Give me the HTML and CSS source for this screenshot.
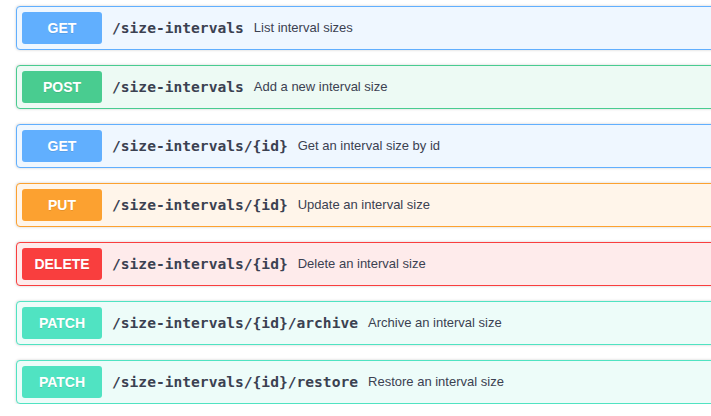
FILE: index.html
```html
<!DOCTYPE html>
<html>
<head>
<meta charset="utf-8">
<link rel="stylesheet" href="styles.css">
</head>
<body>
<div class="list">
  <div class="op get"><span class="method">GET</span><span class="path">/size-intervals</span><span class="desc">List interval sizes</span></div>
  <div class="op post"><span class="method">POST</span><span class="path">/size-intervals</span><span class="desc">Add a new interval size</span></div>
  <div class="op get"><span class="method">GET</span><span class="path">/size-intervals/{id}</span><span class="desc">Get an interval size by id</span></div>
  <div class="op put"><span class="method">PUT</span><span class="path">/size-intervals/{id}</span><span class="desc">Update an interval size</span></div>
  <div class="op delete"><span class="method">DELETE</span><span class="path">/size-intervals/{id}</span><span class="desc">Delete an interval size</span></div>
  <div class="op patch"><span class="method">PATCH</span><span class="path">/size-intervals/{id}/archive</span><span class="desc">Archive an interval size</span></div>
  <div class="op patch"><span class="method">PATCH</span><span class="path">/size-intervals/{id}/restore</span><span class="desc">Restore an interval size</span></div>
</div>
</body>
</html>
```
FILE: styles.css
```css
html, body {
  margin: 0;
  padding: 0;
  overflow: hidden;
  background: #fff;
}
body {
  font-family: "Liberation Sans", Arial, sans-serif;
  color: #3b4151;
}
.list {
  padding: 6px 0 0 16px;
  width: 720px;
  display: flex;
  flex-direction: column;
  gap: 15px;
}
.op {
  display: flex;
  align-items: center;
  height: 42px;
  padding: 0 5px;
  border: 1px solid;
  border-radius: 4px;
  box-shadow: 0 0 3px rgba(0,0,0,0.19);
}
.method {
  box-sizing: border-box;
  width: 80px;
  height: 32px;
  display: flex;
  align-items: center;
  justify-content: center;
  border-radius: 3px;
  color: #fff;
  font-weight: bold;
  font-size: 14px;
  text-shadow: 0 1px 0 rgba(0,0,0,0.1);
}
.path, .desc {
  padding-bottom: 1px;
}
.path {
  font-family: "DejaVu Sans Mono", monospace;
  font-weight: bold;
  font-size: 14.6px;
  padding-left: 10px;
  padding-right: 10px;
}
.desc {
  font-size: 13px;
}
.get { border-color: #61affe; background: #eff7ff; }
.get .method { background: #61affe; }
.post { border-color: #49cc90; background: #edfaf4; }
.post .method { background: #49cc90; }
.put { border-color: #fca130; background: #fff5ea; }
.put .method { background: #fca130; }
.delete { border-color: #f93e3e; background: #feebeb; }
.delete .method { background: #f93e3e; }
.patch { border-color: #50e3c2; background: #edfcf9; }
.patch .method { background: #50e3c2; }
```
